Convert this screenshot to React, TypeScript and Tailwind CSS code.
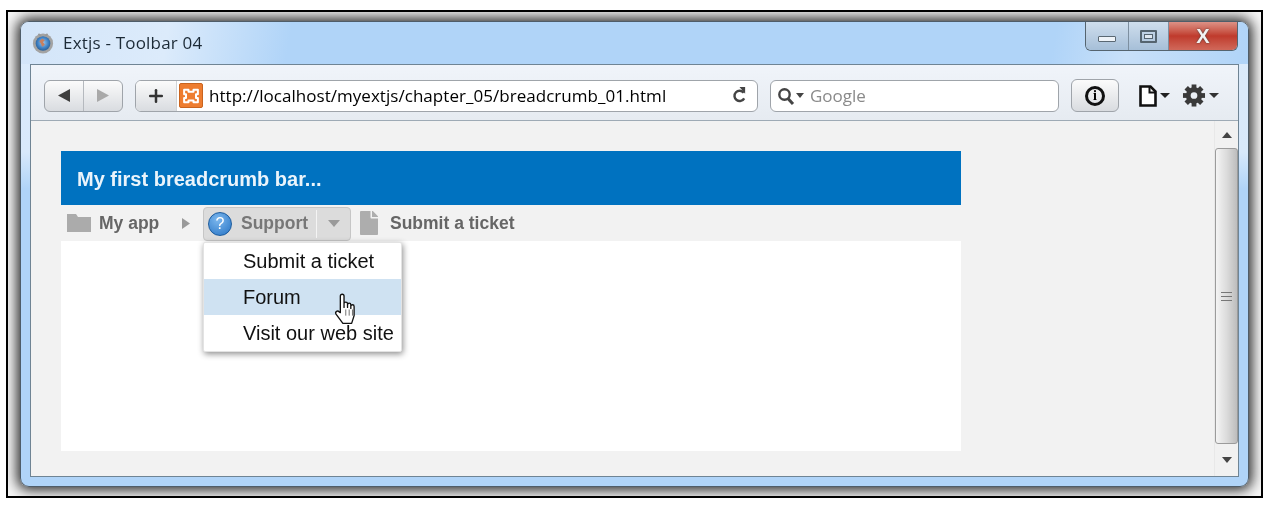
import { Plus } from 'lucide-react';
import { FaFile } from 'react-icons/fa';

const chromeFont = { fontFamily: '"Open Sans", "Noto Sans", sans-serif' };

function Triangle({ dir, className }: { dir: 'left' | 'right' | 'down' | 'up'; className?: string }) {
  const points = {
    left: '10,0 10,12 0,6',
    right: '0,0 0,12 10,6',
    down: '0,0 12,0 6,7',
    up: '0,7 12,7 6,0',
  }[dir];
  const box = dir === 'left' || dir === 'right' ? '0 0 10 12' : '0 0 12 7';
  return (
    <svg viewBox={box} className={className} preserveAspectRatio="none">
      <polygon points={points} fill="currentColor" />
    </svg>
  );
}

function BrowserIcon() {
  return (
    <svg viewBox="0 0 24 24" className="w-[22px] h-[22px]">
      <defs>
        <radialGradient id="globe" cx="50%" cy="45%" r="55%">
          <stop offset="0%" stopColor="#9cc8ee" />
          <stop offset="65%" stopColor="#3f82c6" />
          <stop offset="100%" stopColor="#2b5f96" />
        </radialGradient>
      </defs>
      <circle cx="12" cy="12.500" r="11" fill="#a3a3a3" />
      <circle cx="12" cy="12.500" r="8" fill="url(#globe)" />
      <path d="M8 10l3-3 3 2-2 2 2 3-3 2-1-3z" fill="#c9805f" />
      <path d="M7 2l3 3M17 2l-3 3" stroke="#9a9a9a" strokeWidth="2" />
    </svg>
  );
}

function XamppIcon() {
  return (
    <div className="w-[24px] h-[25px] rounded-[2px] bg-[#ee7d30] border border-[#c9641f] flex items-center justify-center">
      <svg viewBox="0 0 16 16" className="w-[20px] h-[20px]">
        <path
          d="M2.500 3h3.500v1.500h4V3h3.500v3.500H12v3h1.500V13H10v-1.500H6V13H2.500V9.500H4v-3H2.500z"
          fill="none"
          stroke="#fff"
          strokeWidth="1.600"
          strokeLinejoin="round"
        />
      </svg>
    </div>
  );
}

function ReloadIcon() {
  return (
    <svg viewBox="0 0 16 18" className="w-[15px] h-[17px] text-[#444]">
      <path d="M12.500 6A5.500 5.500 0 1 0 13 12" fill="none" stroke="currentColor" strokeWidth="2.600" />
      <polygon points="8,0 14,0 14,7" fill="currentColor" />
    </svg>
  );
}

function SearchIcon() {
  return (
    <svg viewBox="0 0 18 18" className="w-[18px] h-[18px] text-[#444]">
      <circle cx="7.500" cy="7.500" r="5.200" fill="none" stroke="currentColor" strokeWidth="2.400" />
      <path d="M10.500 11l5.500 6" stroke="currentColor" strokeWidth="3" />
    </svg>
  );
}

function PageIcon() {
  return (
    <svg viewBox="0 0 18 22" className="w-[18px] h-[22px] text-[#111]">
      <path d="M1.500 1.500h10l5 5v14h-15z" fill="#fff" stroke="currentColor" strokeWidth="2.600" />
      <path d="M10.500 1.500v6H16.500" fill="none" stroke="currentColor" strokeWidth="2" />
    </svg>
  );
}

function GearIcon() {
  return (
    <svg viewBox="0 0 24 24" className="w-[24px] h-[23px] text-[#3a3a3a]">
      {[0, 45, 90, 135, 180, 225, 270, 315].map((angle) => (
        <rect key={angle} x="9.500" y="0.500" width="5" height="6" fill="currentColor" transform={`rotate(${angle} 12 12)`} />
      ))}
      <circle cx="12" cy="12" r="6" fill="none" stroke="currentColor" strokeWidth="5" />
    </svg>
  );
}

function FolderIcon() {
  return (
    <svg viewBox="0 0 24 18" className="ml-[6px] w-[24px] h-[18px] text-[#ababab]">
      <path d="M0 0h9l2 3h13v15H0z" fill="currentColor" />
    </svg>
  );
}

function HandCursor() {
  return (
    <svg viewBox="0 0 24 36" className="w-[25px] h-[37px]">
      <path
        d="M6 20V4a1.800 1.800 0 0 1 3.600 0v11V11.500a1.700 1.700 0 0 1 3.400 0V15v-2.500a1.600 1.600 0 0 1 3.200 0V16v-2a1.600 1.600 0 0 1 3.200 0v9l-2.400 7.500H8.500L1.800 21.500c-1.300-2.300 1.700-4 3-2.200z"
        fill="#fff"
        stroke="#111"
        strokeWidth="1.300"
        strokeLinejoin="round"
      />
      <path d="M11.300 17v6M14.600 17v6M17.800 17v6" stroke="#555" strokeWidth="0.800" />
    </svg>
  );
}

function WindowControls() {
  return (
    <div className="flex h-[29px] mr-px rounded-b-[6px] border border-t-0 border-[#55646f] overflow-hidden">
      <div className="w-[43px] flex items-end justify-center pb-[8px] border-r border-[#7d8fa0] bg-gradient-to-b from-[#cfdeed] to-[#a6bfd8]">
        <div className="w-[18px] h-[6px] rounded-[1px] bg-[#eef3f8] border border-[#5a6873]" />
      </div>
      <div className="w-[40px] flex items-center justify-center border-r border-[#7d8fa0] bg-gradient-to-b from-[#cfdeed] to-[#a6bfd8]">
        <div className="w-[17px] h-[13px] rounded-[1px] border-2 border-[#55646f] flex items-center justify-center">
          <div className="w-[9px] h-[5px] border border-[#55646f] bg-[#dfe8f1]" />
        </div>
      </div>
      <div
        className="w-[68px] flex items-center justify-center bg-gradient-to-b from-[#dc9186] via-[#bf3a2c] to-[#d0685a] text-[20px] font-bold text-[#f2f2f2] leading-none [text-shadow:0_0_2px_#333]"
        style={{ fontFamily: '"Liberation Sans", sans-serif' }}
      >
        X
      </div>
    </div>
  );
}

function Toolbar() {
  return (
    <div
      className="h-[56px] flex items-center pl-[13px] pr-[17px] pt-[6px] bg-gradient-to-b from-[#f0f4fa] to-[#e6ebf1] border-b border-[#9eaab5]"
      style={chromeFont}
    >
      <div className="w-[79px] h-[32px] flex rounded-[6px] border border-[#9fa4aa] bg-gradient-to-b from-[#fbfbfb] to-[#d9dce0]">
        <div className="w-[39px] flex items-center justify-center border-r border-[#b5b9be]">
          <Triangle dir="left" className="w-[12px] h-[13px] text-[#3f3f3f]" />
        </div>
        <div className="flex-1 flex items-center justify-center">
          <Triangle dir="right" className="w-[12px] h-[13px] text-[#a9a9a9]" />
        </div>
      </div>
      <div className="ml-[12px] w-[623px] h-[32px] flex rounded-[6px] border border-[#9fa4aa] bg-white overflow-hidden">
        <div className="w-[41px] shrink-0 flex items-center justify-center border-r border-[#d0d3d6] bg-gradient-to-b from-[#fbfbfb] to-[#d9dce0]">
          <Plus className="w-[20px] h-[20px] text-[#333]" strokeWidth={3} absoluteStrokeWidth />
        </div>
        <div className="flex-1 flex items-center pl-[2px] pr-[10px]">
          <XamppIcon />
          <span className="ml-[6px] pt-px text-[17px] text-black tracking-[0.04px] whitespace-nowrap">
            http://localhost/myextjs/chapter_05/breadcrumb_01.html
          </span>
          <div className="ml-auto">
            <ReloadIcon />
          </div>
        </div>
      </div>
      <div className="ml-[12px] w-[289px] h-[32px] flex items-center pl-[6px] rounded-[6px] border border-[#9fa4aa] bg-white">
        <SearchIcon />
        <Triangle dir="down" className="w-[8px] h-[5px] ml-[1px] text-[#444]" />
        <span className="ml-[6px] pt-px text-[17px] text-[#8a8a8a]">Google</span>
      </div>
      <div className="ml-[12px] w-[48px] h-[33px] flex items-center justify-center rounded-[6px] border border-[#9fa4aa] bg-gradient-to-b from-[#fbfbfb] to-[#d9dce0]">
        <div
          className="w-[20px] h-[20px] rounded-full border-[3px] border-[#111] flex items-center justify-center text-[14px] font-bold leading-none"
          style={{ fontFamily: '"Liberation Serif", serif' }}
        >
          i
        </div>
      </div>
      <div className="ml-[20px] flex items-center gap-[3px]">
        <PageIcon />
        <Triangle dir="down" className="w-[10px] h-[5px] text-[#222]" />
      </div>
      <div className="ml-[12px] flex items-center gap-[3px]">
        <GearIcon />
        <Triangle dir="down" className="w-[10px] h-[5px] text-[#333]" />
      </div>
    </div>
  );
}

function Breadcrumb() {
  return (
    <div className="h-[36px] flex items-center bg-[#f2f2f2] text-[17.5px] font-bold text-[#666]">
      <FolderIcon />
      <span className="ml-[8px] w-[60px] whitespace-nowrap">My app</span>
      <Triangle dir="right" className="ml-[23px] w-[8px] h-[11px] text-[#9a9a9a]" />
      <div className="ml-[13px] w-[148px] h-[34px] mt-[1px] flex items-center rounded-[4px] border border-[#c6c6c6] bg-[#dcdcdc]">
        <div
          className="ml-[4px] w-[24px] h-[24px] rounded-full border border-[#1d5c9e] bg-[radial-gradient(circle_at_40%_30%,#7db8ee,#2673c4)] flex items-center justify-center text-[16px] font-normal text-white leading-none"
          style={{ fontFamily: '"Liberation Sans", sans-serif' }}
        >
          ?
        </div>
        <span className="ml-[9px] w-[75px] whitespace-nowrap text-[#777]">Support</span>
        <div className="w-px h-[28px] bg-[#f4f4f4]" />
        <Triangle dir="down" className="ml-[11px] w-[12px] h-[7px] text-[#9a9a9a]" />
      </div>
      <FaFile className="ml-[9px] w-[18px] h-[24px] text-[#adadad]" />
      <span className="ml-[12px] whitespace-nowrap">Submit a ticket</span>
    </div>
  );
}

function SupportMenu() {
  return (
    <div className="absolute left-[142px] top-[91px] w-[199px] h-[110px] bg-white border border-[#e3e3e3] rounded-[2px] shadow-[1px_2px_6px_rgba(0,0,0,0.45)] text-[20px] text-[#111]">
      <div className="h-[36px] flex items-center pl-[39px]">Submit a ticket</div>
      <div className="h-[36px] flex items-center pl-[39px] bg-[#cfe2f2]">Forum</div>
      <div className="h-[36px] flex items-center pl-[39px] whitespace-nowrap">Visit our web site</div>
      <div className="absolute left-[130px] top-[49px]">
        <HandCursor />
      </div>
    </div>
  );
}

function Scrollbar() {
  return (
    <div className="w-[24px] shrink-0 flex flex-col bg-[#f1f1f1] border-l border-[#e8e8e8]">
      <div className="h-[27px] flex items-center justify-center">
        <Triangle dir="up" className="w-[10px] h-[6px] text-[#444]" />
      </div>
      <div className="h-[296px] flex items-center justify-center rounded-[3px] border border-[#9b9b9b] bg-gradient-to-r from-[#f4f4f4] via-[#dcdcdc] to-[#bdbdbd]">
        <div className="w-[11px] h-[9px] border-y border-[#777] flex items-center">
          <div className="w-full h-px bg-[#777]" />
        </div>
      </div>
      <div className="flex-1 flex items-center justify-center">
        <Triangle dir="down" className="w-[10px] h-[6px] text-[#444]" />
      </div>
    </div>
  );
}

export default function App() {
  return (
    <div
      className="w-[1272px] h-[507px] overflow-hidden bg-white pl-[6px] pt-[10px] blur-[0.4px]"
      style={{ fontFamily: '"Liberation Sans", Arial, sans-serif' }}
    >
      <div className="w-[1257px] h-[488px] overflow-hidden border-2 border-black bg-[#f6f6f6] pl-[12px] pt-[9px]">
        <div className="w-[1229px] h-[466px] flex flex-col rounded-[9px] border border-[#4f5d69] px-[9px] pb-[9px] shadow-[0_0_13px_3px_rgba(0,0,0,0.85)] bg-[linear-gradient(180deg,#dcebfb_0%,#d8e9fb_28%,#b0d4f8_36%,#b0d4f8_100%)]">
          <div
            className="h-[42px] -mx-[9px] px-[9px] rounded-t-[8px] shrink-0 flex justify-between bg-[linear-gradient(100deg,#d3e5f9_0%,#dcebfb_12%,#b0d4f8_22%,#b0d4f8_84%,#c8e0f9_90%,#b0d4f8_100%)]"
            style={chromeFont}
          >
            <div className="flex items-center gap-[9px] pl-[2px] pb-[1px]">
              <BrowserIcon />
              <span className="text-[17px] tracking-[0.2px] text-[#1c2a36]">Extjs - Toolbar 04</span>
            </div>
            <WindowControls />
          </div>
          <div className="flex-1 min-h-0 flex flex-col border border-[#6f8494]">
            <Toolbar />
            <div className="flex-1 min-h-0 flex">
              <div className="flex-1 bg-[#f2f2f2] pt-[30px] pl-[30px]">
                <div className="relative w-[900px]">
                  <div className="h-[54px] flex items-center pl-[16px] pt-[1px] bg-[#0072c0] text-[20px] font-bold text-[#eaf4fb]">
                    My first breadcrumb bar...
                  </div>
                  <Breadcrumb />
                  <div className="h-[210px] bg-white" />
                  <SupportMenu />
                </div>
              </div>
              <Scrollbar />
            </div>
          </div>
        </div>
      </div>
    </div>
  );
}
